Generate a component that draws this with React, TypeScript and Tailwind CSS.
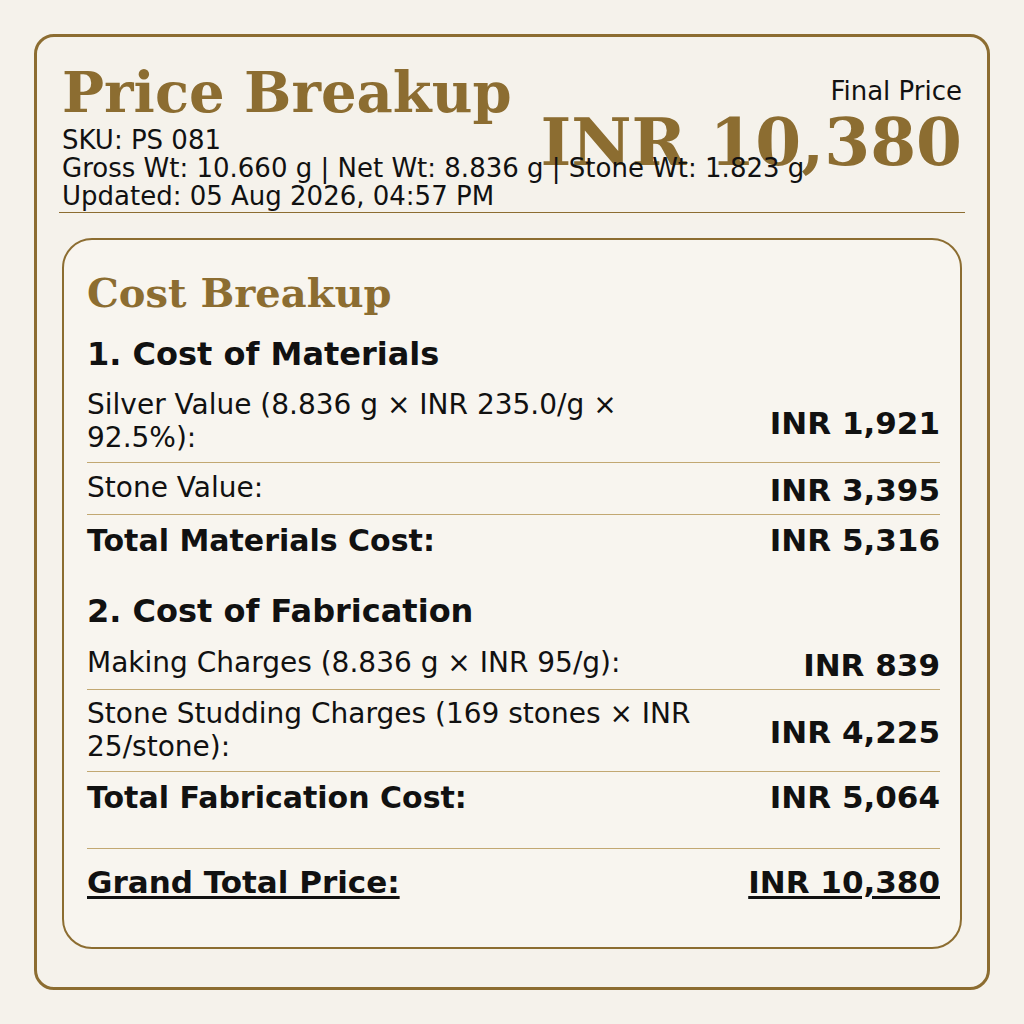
const serif = "font-['DejaVu_Serif','Liberation_Serif',serif]";

type Row = { label: string; value: string; total?: boolean };

const materials: Row[] = [
  { label: "Silver Value (8.836 g × INR 235.0/g × 92.5%):", value: "INR 1,921" },
  { label: "Stone Value:", value: "INR 3,395" },
  { label: "Total Materials Cost:", value: "INR 5,316", total: true },
];

const fabrication: Row[] = [
  { label: "Making Charges (8.836 g × INR 95/g):", value: "INR 839" },
  { label: "Stone Studding Charges (169 stones × INR 25/stone):", value: "INR 4,225" },
  { label: "Total Fabrication Cost:", value: "INR 5,064", total: true },
];

const CostRow = ({ label, value, total }: Row) => (
  <div
    className={
      "flex items-center justify-between gap-6 py-[8px] " +
      (total ? "" : "border-b border-[#c2a872]")
    }
  >
    <span
      className={
        total
          ? "text-[30px] font-bold leading-[35px]"
          : "text-[28px] leading-[32.5px] max-w-[625px]"
      }
    >
      {label}
    </span>
    <span
      className={
        "text-[31px] font-bold whitespace-nowrap " +
        (total ? "leading-[35px]" : "leading-[31px] mt-[4px]")
      }
    >
      {value}
    </span>
  </div>
);

const Section = ({ title, rows, className }: { title: string; rows: Row[]; className: string }) => (
  <section className={className}>
    <h3 className="text-[32px] font-bold leading-[37px] mb-[8px]">{title}</h3>
    {rows.map((r) => (
      <CostRow key={r.label} {...r} />
    ))}
  </section>
);

export default function App() {
  return (
    <div className="min-h-screen bg-[#f5f2eb] p-[34px] font-['DejaVu_Sans','Liberation_Sans',sans-serif] text-[#111111]">
      <div className="h-[956px] rounded-[20px] border-[3px] border-[#8c6d31] bg-[#f5f2eb] px-[22px] pt-[23px]">
        <header className="flex items-start justify-between border-b border-[#8c6d31] px-[3px] pb-[2px]">
          <div className="relative z-10 min-w-0 flex-1 whitespace-nowrap">
            <h1 className={serif + " text-[56px] font-bold leading-[65px] text-[#8c6d31] mb-[1px]"}>
              Price Breakup
            </h1>
            <p className="text-[26px] leading-[28px]">SKU: PS 081</p>
            <p className="text-[26px] leading-[28px]">
              Gross Wt: 10.660 g | Net Wt: 8.836 g | Stone Wt: 1.823 g
            </p>
            <p className="text-[26px] leading-[28px]">Updated: 05 Aug 2026, 04:57 PM</p>
          </div>
          <div className="flex shrink-0 flex-col items-end pt-[17px] whitespace-nowrap">
            <span className="text-[26px] leading-[28px]">Final Price</span>
            <span className={serif + " text-[66px] font-bold leading-none mt-[4px] text-[#8c6d31]"}>
              INR 10,380
            </span>
          </div>
        </header>

        <div className="mx-[3px] mt-[25px] rounded-[30px] border-2 border-[#8c6d31] bg-[#f8f5ef] pl-[23px] pr-[20px] pt-[29px] pb-[24px]">
          <h2 className={serif + " text-[40px] font-bold leading-[47px] text-[#8c6d31]"}>
            Cost Breakup
          </h2>
          <Section title="1. Cost of Materials" rows={materials} className="mt-[20px]" />
          <Section title="2. Cost of Fabrication" rows={fabrication} className="mt-[27px]" />
          <div className="mt-[25px] flex justify-between border-t border-[#c2a872] pt-[15px] pb-[23px] text-[31px] font-bold leading-[36px] underline underline-offset-[3px]">
            <span>Grand Total Price:</span>
            <span>INR 10,380</span>
          </div>
        </div>
      </div>
    </div>
  );
}
